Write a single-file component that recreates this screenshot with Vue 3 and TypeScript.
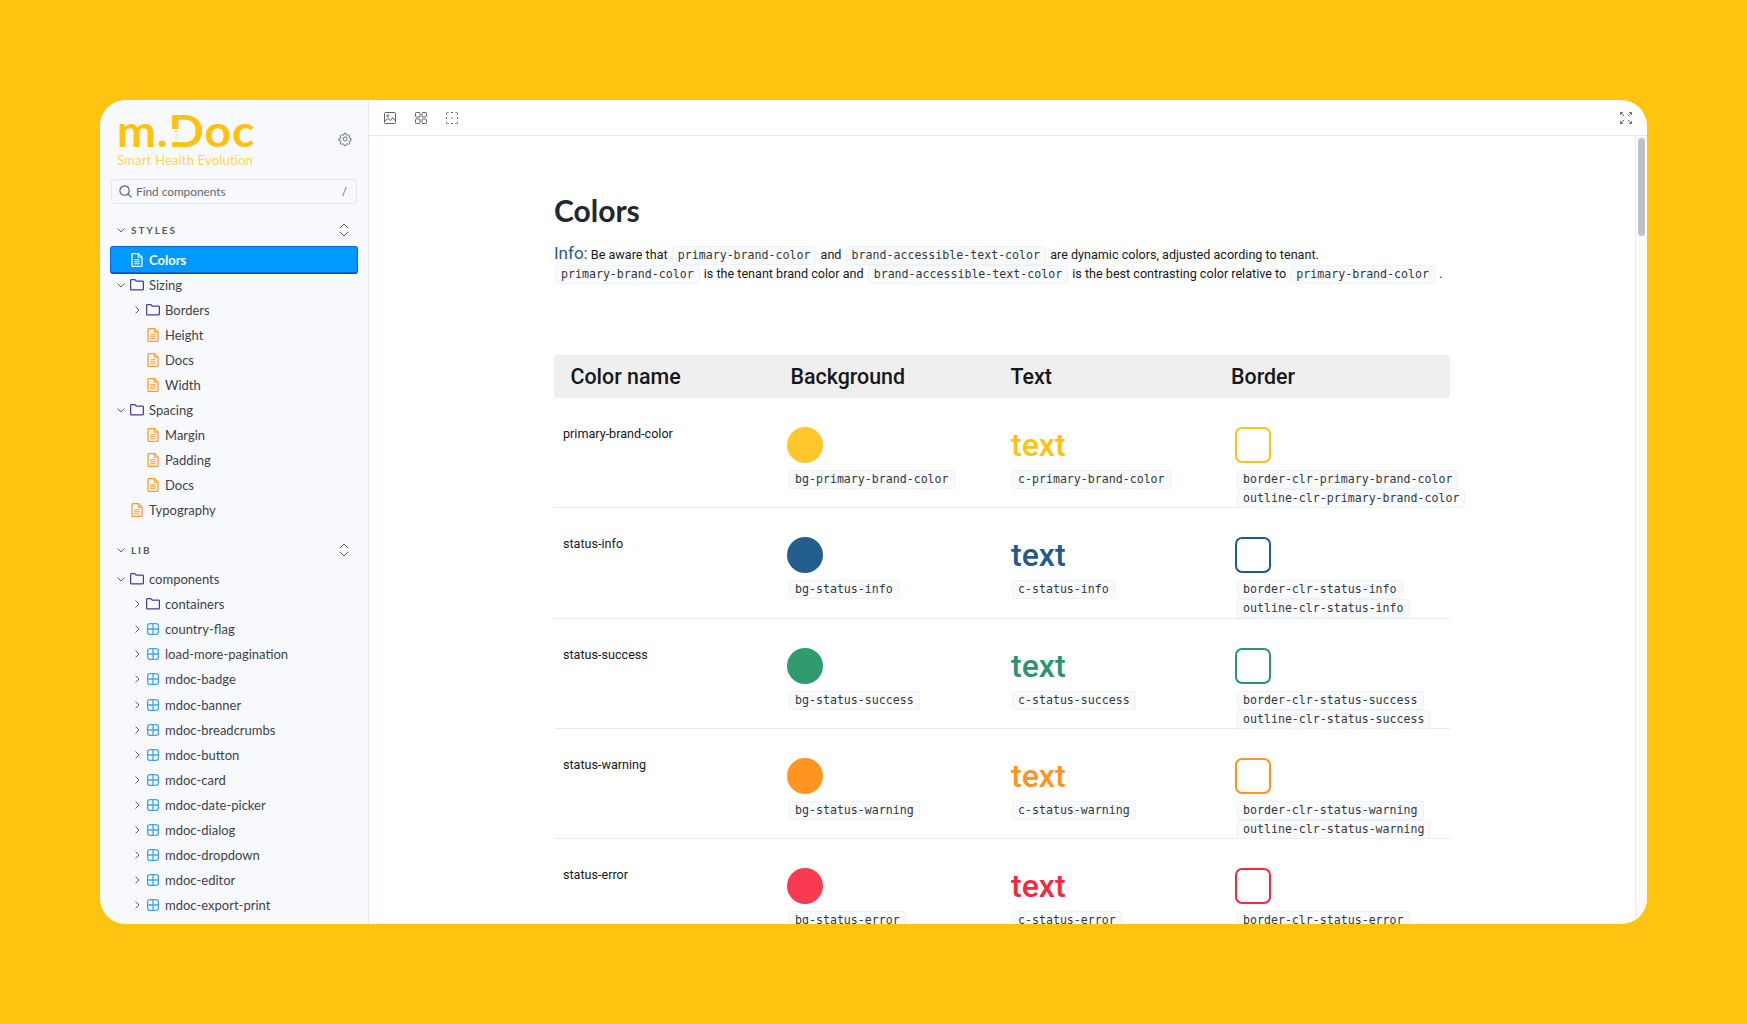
<script setup lang="ts">
type Icon = "folder" | "doc" | "comp";
interface TreeItem {
  label: string;
  depth: number;
  icon: Icon;
  chevron?: "down" | "right";
  active?: boolean;
}

const styles: TreeItem[] = [
  { label: "Colors", depth: 0, icon: "doc", active: true },
  { label: "Sizing", depth: 0, icon: "folder", chevron: "down" },
  { label: "Borders", depth: 1, icon: "folder", chevron: "right" },
  { label: "Height", depth: 1, icon: "doc" },
  { label: "Docs", depth: 1, icon: "doc" },
  { label: "Width", depth: 1, icon: "doc" },
  { label: "Spacing", depth: 0, icon: "folder", chevron: "down" },
  { label: "Margin", depth: 1, icon: "doc" },
  { label: "Padding", depth: 1, icon: "doc" },
  { label: "Docs", depth: 1, icon: "doc" },
  { label: "Typography", depth: 0, icon: "doc" },
];

const lib: TreeItem[] = [
  { label: "components", depth: 0, icon: "folder", chevron: "down" },
  { label: "containers", depth: 1, icon: "folder", chevron: "right" },
  ...[
    "country-flag",
    "load-more-pagination",
    "mdoc-badge",
    "mdoc-banner",
    "mdoc-breadcrumbs",
    "mdoc-button",
    "mdoc-card",
    "mdoc-date-picker",
    "mdoc-dialog",
    "mdoc-dropdown",
    "mdoc-editor",
    "mdoc-export-print",
  ].map((label): TreeItem => ({ label, depth: 1, icon: "comp", chevron: "right" })),
];

const sections = [
  { title: "STYLES", items: styles },
  { title: "LIB", items: lib },
];

const colors = [
  { name: "primary-brand-color", value: "#ffc20e", fill: "#ffc72c" },
  { name: "status-info", value: "#1f5a8c", fill: "#245e8f" },
  { name: "status-success", value: "#2a9470", fill: "#2f9b6f" },
  { name: "status-warning", value: "#ff9420", fill: "#ff9420" },
  { name: "status-error", value: "#f6283f", fill: "#f93a50" },
];
</script>

<template>
  <div class="page">
    <div class="window">
      <aside class="sidebar">
        <div class="brand">
          <div class="logo">
            <div class="logo-mark">m.<span class="logo-d">D</span>oc</div>
            <div class="logo-sub">Smart Health Evolution</div>
          </div>
          <svg class="gear" viewBox="0 0 24 24" fill="none" stroke="#5b6168" stroke-width="1.5" stroke-linejoin="round">
            <path d="M10.3 2.5h3.4l.5 2.7 1.7.7 2.3-1.6 2.4 2.4-1.6 2.3.7 1.7 2.7.5v3.4l-2.7.5-.7 1.7 1.6 2.3-2.4 2.4-2.3-1.6-1.7.7-.5 2.7h-3.4l-.5-2.7-1.7-.7-2.3 1.6-2.4-2.4 1.6-2.3-.7-1.7-2.7-.5v-3.4l2.7-.5.7-1.7-1.6-2.3 2.4-2.4 2.3 1.6 1.7-.7z" />
            <circle cx="12" cy="12" r="3.4" />
          </svg>
        </div>

        <div class="search">
          <svg class="search-icon" viewBox="0 0 16 16" fill="none" stroke="#555b63" stroke-width="1.2" stroke-linecap="round">
            <circle cx="7" cy="7" r="5" />
            <path d="M10.8 10.8 14 14" />
          </svg>
          <span class="search-text">Find components</span>
          <span class="search-key">/</span>
        </div>

        <section v-for="section in sections" :key="section.title" class="section">
          <div class="section-head">
            <svg class="chev" viewBox="0 0 10 10" fill="none" stroke="#5b6168" stroke-width="1">
              <path d="M1.5 3.5 5 7l3.5-3.5" />
            </svg>
            <span class="section-title">{{ section.title }}</span>
            <svg class="updown" viewBox="0 0 12 16" fill="none" stroke="#5b6168" stroke-width="1">
              <path d="M2 6l4-4 4 4M2 10l4 4 4-4" />
            </svg>
          </div>
          <div
            v-for="item in section.items"
            :key="item.label + item.depth"
            class="row"
            :class="{ active: item.active }"
            :style="{ paddingLeft: 5 + item.depth * 16 + 'px' }"
          >
            <span class="row-chev">
              <svg v-if="item.chevron === 'down'" class="chev" viewBox="0 0 10 10" fill="none" stroke="#5b6168" stroke-width="1">
                <path d="M1.5 3.5 5 7l3.5-3.5" />
              </svg>
              <svg v-else-if="item.chevron === 'right'" class="chev" viewBox="0 0 10 10" fill="none" stroke="#5b6168" stroke-width="1">
                <path d="M3.5 1.5 7 5 3.5 8.5" />
              </svg>
            </span>
            <svg v-if="item.icon === 'folder'" class="icon" viewBox="0 0 14 14" fill="none" stroke="#4b3a9f" stroke-width="1.25" stroke-linejoin="round">
              <path d="M.6 2.6c0-.6.4-1 1-1h3.3l1.3 1.500h6.200c.6 0 1 .4 1 1v6.700c0 .6-.4 1-1 1H1.600c-.6 0-1-.4-1-1z" />
            </svg>
            <svg v-else-if="item.icon === 'doc'" class="icon" viewBox="0 0 14 14" fill="none" :stroke="item.active ? '#ffffff' : '#ff9a2e'" stroke-width="1.3" stroke-linejoin="round">
              <path d="M2 1.500c0-.5.4-.9.9-.9h5.600L12 4.100v8.300c0 .5-.4.9-.9.9H2.900c-.5 0-.9-.4-.9-.9z" />
              <path d="M8.300.8v3.500H12M4.300 6.800h5.400M4.300 8.800h5.400M4.300 10.800h5.400" stroke-width="1.100" />
            </svg>
            <svg v-else class="icon" viewBox="0 0 14 14" fill="none" stroke="#3fa4f2" stroke-width="1.300">
              <rect x="1.600" y="1.600" width="10.800" height="10.800" rx="2.400" />
              <path d="M7 1.600v10.800M1.600 7h10.800" />
            </svg>
            <span class="row-label">{{ item.label }}</span>
          </div>
        </section>
      </aside>

      <main class="main">
        <header class="toolbar">
          <svg class="tool" viewBox="0 0 14 14" fill="none" stroke="#5f646b" stroke-width="1">
            <rect x="1.500" y="1.500" width="11" height="11" rx="1" />
            <circle cx="4.800" cy="4.800" r="1" />
            <path d="M1.500 10.500 5 7.500l2.500 2 2-3 3 3.500" />
          </svg>
          <svg class="tool" viewBox="0 0 14 14" fill="none" stroke="#5f646b" stroke-width="1">
            <rect x="1.500" y="1.500" width="4.500" height="4.500" rx=".8" />
            <rect x="8" y="1.500" width="4.500" height="4.500" rx=".8" />
            <rect x="1.500" y="8" width="4.500" height="4.500" rx=".8" />
            <rect x="8" y="8" width="4.500" height="4.500" rx=".8" />
          </svg>
          <svg class="tool" viewBox="0 0 14 14" fill="none" stroke="#5f646b" stroke-width="1">
            <path d="M1.500 3.500V2.500a1 1 0 0 1 1-1h1M6 1.500h2M10.500 1.500h1a1 1 0 0 1 1 1v1M12.500 6v2M12.500 10.500v1a1 1 0 0 1-1 1h-1M8 12.500H6M3.500 12.500h-1a1 1 0 0 1-1-1v-1M1.500 8V6" />
            <circle cx="7" cy="7" r=".7" fill="#5f646b" stroke="none" />
          </svg>
          <svg class="tool expand" viewBox="0 0 14 14" fill="none" stroke="#5f646b" stroke-width="1">
            <path d="M5.200 5.200 2 2M8.800 5.200 12 2M5.200 8.800 2 12M8.800 8.800 12 12" />
            <path d="M1.500 3.800V1.500h2.300M10.200 1.500h2.300v2.300M1.500 10.200v2.300h2.300M10.200 12.500h2.300v-2.300" />
          </svg>
        </header>

        <div class="body">
          <div class="content">
            <h1 class="title">Colors</h1>
            <p class="info">
              <span class="info-label">Info:</span> Be aware that <code class="code">primary-brand-color</code> and
              <code class="code">brand-accessible-text-color</code> are dynamic colors, adjusted acording to tenant.<br />
              <code class="code">primary-brand-color</code> is the tenant brand color and
              <code class="code">brand-accessible-text-color</code> is the best contrasting color relative to
              <code class="code">primary-brand-color</code> .
            </p>

            <div class="table">
              <div class="table-head">
                <div class="th">Color name</div>
                <div class="th">Background</div>
                <div class="th">Text</div>
                <div class="th">Border</div>
              </div>
              <div v-for="c in colors" :key="c.name" class="table-row">
                <div class="color-name">{{ c.name }}</div>
                <div class="cell cell-bg">
                  <div class="swatch-circle" :style="{ background: c.fill }"></div>
                  <code class="code">bg-{{ c.name }}</code>
                </div>
                <div class="cell cell-text">
                  <div class="swatch-text" :style="{ color: c.value }">text</div>
                  <code class="code">c-{{ c.name }}</code>
                </div>
                <div class="cell cell-border">
                  <div class="swatch-border" :style="{ borderColor: c.value }"></div>
                  <code class="code">border-clr-{{ c.name }}</code>
                  <code class="code">outline-clr-{{ c.name }}</code>
                </div>
              </div>
            </div>
          </div>
          <div class="scrollbar"><div class="thumb"></div></div>
        </div>
      </main>
    </div>
  </div>
</template>

<style>
html,
body {
  margin: 0;
  background: #ffc40f;
}
</style>

<style scoped>
.page {
  box-sizing: border-box;
  width: 1747px;
  height: 1024px;
  padding: 100px;
  background: #ffc40f;
  overflow: hidden;
}

.window {
  display: flex;
  height: 824px;
  border-radius: 26px;
  background: #fff;
  overflow: hidden;
}

.sidebar {
  box-sizing: border-box;
  flex: 0 0 269px;
  padding: 0 11px;
  overflow: hidden;
  background: #f8f9fd;
  border-right: 1px solid #e4e8f0;
  font-family: "Lato", "Open Sans", sans-serif;
  color: #3d4249;
}

.brand {
  display: flex;
  align-items: center;
  justify-content: space-between;
  height: 79px;
  padding: 0 5px 0 6px;
}

.logo {
  padding-bottom: 2px;
}

.logo-mark {
  height: 43px;
  font-size: 44px;
  line-height: 42px;
  font-weight: 700;
  color: #ffc20e;
  letter-spacing: 0.6px;
  transform: scaleX(1.06);
  transform-origin: left center;
}

/* the D in the logo has its stem cut away, with a few dots left */
.logo-d {
  position: relative;
  display: inline-block;
}

.logo-d::after {
  content: "";
  position: absolute;
  top: 20px;
  left: 1px;
  width: 9px;
  height: 13px;
  background:
    radial-gradient(circle 1px at 6px 2px, #ffd45f 98%, transparent),
    radial-gradient(circle 1px at 7px 6px, #ffd45f 98%, transparent),
    radial-gradient(circle 1px at 6px 9px, #ffe08a 98%, transparent),
    #f8f9fd;
}

.logo-sub {
  font-size: 13.2px;
  line-height: 16px;
  color: #ffd45f;
  letter-spacing: 0.1px;
}

.gear {
  width: 14px;
  height: 14px;
  margin-bottom: 2px;
}

.search {
  display: flex;
  align-items: center;
  box-sizing: border-box;
  height: 25px;
  padding: 0 9px 0 6px;
  border: 1px solid #e2e6ee;
  border-radius: 4px;
  font-size: 11.8px;
  color: #63686f;
}

.search-icon {
  width: 15px;
  height: 15px;
  margin-right: 3px;
}

.search-text {
  flex: 1;
}

.section {
  margin-top: 14px;
}

.section + .section {
  margin-top: 14.5px;
}

.section-head {
  display: flex;
  align-items: center;
  height: 24px;
  margin-bottom: 5px;
  padding: 0 7px 0 5px;
}

.section-title {
  flex: 1;
  margin-left: 5px;
  font-size: 10px;
  font-weight: 700;
  letter-spacing: 1.9px;
  color: #565b62;
}

.chev {
  display: block;
  width: 10px;
  height: 10px;
}

.updown {
  width: 12px;
  height: 16px;
}

.row {
  display: flex;
  align-items: center;
  height: 25.1px;
  font-size: 13px;
  white-space: nowrap;
}

.row.active {
  background: #0099ff;
  box-shadow: 0 0 0 1px #0b62d6, 0 1px 0 1px #0a50c0;
  border-radius: 2px;
  color: #fff;
  font-weight: 700;
}

.row-chev {
  flex: 0 0 14px;
}

.icon {
  flex: 0 0 14px;
  height: 14px;
  margin-right: 5px;
}

.main {
  display: flex;
  flex: 1;
  flex-direction: column;
  min-width: 0;
}

.toolbar {
  display: flex;
  flex: 0 0 36px;
  box-sizing: border-box;
  align-items: center;
  gap: 17px;
  padding: 0 14px;
  border-bottom: 1px solid #e4e8f0;
}

.tool {
  width: 14px;
  height: 14px;
}

.expand {
  margin-left: auto;
}

.body {
  display: flex;
  flex: 1;
  min-height: 0;
}

.content {
  flex: 1;
  min-width: 0;
  padding: 57px 0 0 185px;
  overflow: hidden;
  font-family: "Roboto", sans-serif;
  color: #16181b;
}

.title {
  margin: 0;
  font-family: "Lato", "Open Sans", sans-serif;
  font-size: 30px;
  line-height: 34px;
  font-weight: 700;
  color: #22272c;
}

.info {
  margin: 18px 0 72px;
  font-size: 12.6px;
  line-height: 19px;
  white-space: nowrap;
}

.info-label {
  font-size: 17px;
  line-height: 1;
  color: #1f5a8c;
}

.info .code {
  margin: 1px 1px -1px;
  vertical-align: top;
}

.code {
  display: inline-block;
  box-sizing: border-box;
  height: 19px;
  padding: 0 5px;
  border: 1px solid #eef2f8;
  border-radius: 3px;
  background: #f8fafc;
  font-family: "DejaVu Sans Mono", "Liberation Mono", monospace;
  font-size: 11.6px;
  line-height: 17px;
  color: #33373c;
  white-space: nowrap;
}

.table {
  width: 896px;
}

.table-head {
  display: grid;
  grid-template-columns: 220px 220px 220.5px 1fr;
  align-items: center;
  height: 43px;
  padding-left: 16.5px;
  border-radius: 3px;
  background: #efefef;
}

.th {
  font-size: 21.4px;
  font-weight: 500;
  color: #16181b;
}

.table-row {
  display: grid;
  grid-template-columns: 220px 220px 220px 1fr;
  box-sizing: border-box;
  height: 110.300px;
  border-bottom: 1px solid #e8ebef;
}

.color-name {
  padding: 27px 0 0 9px;
  font-size: 12.6px;
  line-height: 18px;
}

.cell {
  display: flex;
  flex-direction: column;
  align-items: flex-start;
  padding-top: 29px;
}

.cell .code {
  margin-left: 2px;
}

.cell-bg {
  margin-left: 13px;
}

.cell-text {
  margin-left: 16px;
}

.cell-border {
  margin-left: 21px;
}

.swatch-circle {
  width: 36px;
  height: 36px;
  margin-bottom: 7px;
  border-radius: 50%;
}

.swatch-text {
  height: 36px;
  margin-bottom: 7px;
  margin-left: 1px;
  font-size: 32px;
  line-height: 36px;
  font-weight: 500;
}

.swatch-border {
  box-sizing: border-box;
  width: 36px;
  height: 36px;
  margin-bottom: 7px;
  border: 2px solid;
  border-radius: 7px;
}

.scrollbar {
  flex: 0 0 12px;
  box-sizing: border-box;
  padding: 2px 2px 0 2px;
  border-left: 1px solid #ececec;
  background: #fafafa;
}

.thumb {
  height: 98px;
  border-radius: 4px;
  background: #bdc1c5;
}
</style>
